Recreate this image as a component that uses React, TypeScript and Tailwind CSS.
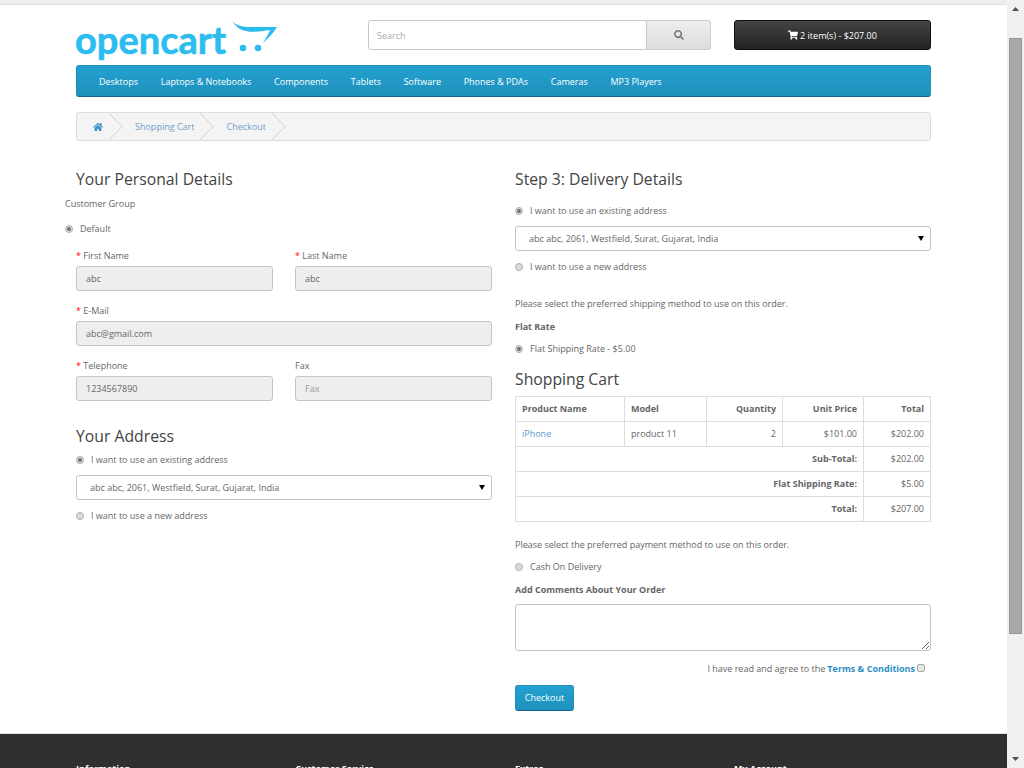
import { ReactNode } from 'react'
import { FaHome, FaSearch, FaShoppingCart } from 'react-icons/fa'

const navigation = ['Desktops', 'Laptops & Notebooks', 'Components', 'Tablets', 'Software', 'Phones & PDAs', 'Cameras', 'MP3 Players']

const footerColumns = ['Information', 'Customer Service', 'Extras', 'My Account']

function Radio({ checked = false }: { checked?: boolean }) {
  return (
    <span className="flex h-[8px] w-[8px] shrink-0 items-center justify-center rounded-full border border-[#b0b0b0] bg-[#dcdcdc]">
      {checked && <span className="h-[4px] w-[4px] rounded-full bg-[#6e6e6e]" />}
    </span>
  )
}

function RadioRow({ label, checked = false, className = '' }: { label: string; checked?: boolean; className?: string }) {
  return (
    <div className={`flex h-[18px] items-center gap-[7px] ${className}`}>
      <Radio checked={checked} />
      <span>{label}</span>
    </div>
  )
}

function Field({ label, value, required = false, placeholder = false }: { label: string; value: string; required?: boolean; placeholder?: boolean }) {
  return (
    <div>
      <div className="h-[18px] leading-[20px]">
        {required && <span className="text-[#f00]">* </span>}
        {label}
      </div>
      <div className={`mt-[2px] flex h-[25px] items-center rounded-[3px] border border-[#c4c4c4] bg-[#eeeeee] px-[9px] ${placeholder ? 'text-[#999]' : ''}`}>
        {value}
      </div>
    </div>
  )
}

function AddressSelect() {
  return (
    <div className="flex h-[25px] items-center justify-between rounded-[3px] border border-[#c4c4c4] bg-white pl-[13px] pr-[6px]">
      <span>abc abc, 2061, Westfield, Surat, Gujarat, India</span>
      <svg width="6" height="5" viewBox="0 0 6 5" className="text-black">
        <path d="M0 0h6L3 5z" fill="currentColor" />
      </svg>
    </div>
  )
}

function Heading({ children, className = '' }: { children: string; className?: string }) {
  return <h2 className={`h-[22px] text-[15.75px] leading-[22px] text-[#444] ${className}`}>{children}</h2>
}

function Crumb({ children }: { children: ReactNode }) {
  return (
    <div className="relative flex h-full items-center pr-[12px]">
      {children}
      <span className="absolute right-[-4px] top-[4px] h-[19px] w-[19px] rotate-45 border-r border-t border-[#d9d9d9]" />
    </div>
  )
}

export default function App() {
  return (
    <div className="flex h-[768px] w-[1024px] overflow-hidden bg-white font-['Open_Sans',sans-serif] text-[9px] text-[#666]">
      <div className="flex h-[768px] w-[1007px] shrink-0 flex-col overflow-hidden">
        {/* Top bar */}
        <div className="h-[5px] shrink-0 border-b border-[#dddddd] bg-[#eeeeee]" />

        <div className="mx-auto w-[855px] shrink-0">
          {/* Logo, search, cart */}
          <header className="mt-[15px] flex h-[30px] items-start">
            <div className="relative h-[40px] w-[292px]">
              <span className="ml-[-1px] font-['Lato',sans-serif] text-[38px] font-bold leading-[38px] text-[#2cbdf0] [-webkit-text-stroke:0.6px_#2cbdf0]">
                opencart
              </span>
              <svg width="50" height="36" viewBox="0 0 50 36" className="absolute left-[152px] top-0">
                <path d="M4 1C8 6 16 7 24 7C32 7 42 7 49 7C46 12 41 18 35 23C38 18 41 13 42 10C34 11 26 13 18 11C12 10 7 6 4 1Z" fill="#2cbdf0" />
                <circle cx="15" cy="28" r="3.3" fill="#2cbdf0" />
                <circle cx="30" cy="28" r="3.3" fill="#2cbdf0" />
              </svg>
            </div>
            <div className="flex h-[30px] w-[343px]">
              <div className="flex flex-1 items-center rounded-l-[3px] border border-[#c8c8c8] bg-white pl-[8px] pt-[2px] text-[#aaa]">Search</div>
              <div className="flex w-[64px] items-center justify-center rounded-r-[3px] border border-l-0 border-[#cccccc] bg-gradient-to-b from-[#eeeeee] to-[#dddddd] text-[#777]">
                <FaSearch size={10} />
              </div>
            </div>
            <div className="ml-[23px] flex h-[30px] w-[197px] items-center justify-center gap-[2px] rounded-[3px] border border-[#111] bg-gradient-to-b from-[#444444] to-[#222222] pt-[2px] text-white">
              <FaShoppingCart size={10} className="mb-[2px]" />
              <span>2 item(s) - $207.00</span>
            </div>
          </header>

          {/* Main menu */}
          <nav className="mt-[15px] flex h-[32px] items-center gap-[22.7px] rounded-[3px] border border-[#1f90bb] border-b-[#14698d] bg-gradient-to-b from-[#23a1d1] to-[#1f90bb] pl-[22px] pt-[2px] text-white">
            {navigation.map((item) => (
              <span key={item}>{item}</span>
            ))}
          </nav>

          {/* Breadcrumb */}
          <div className="mt-[15px] flex h-[29px] items-center gap-[20px] overflow-hidden rounded-[3px] border border-[#dddddd] bg-[#f4f4f4] pl-[15px] text-[#6f9fc8]">
            <Crumb>
              <span className="flex w-[11px] justify-center">
                <FaHome size={10} className="text-[#3a90bf]" />
              </span>
            </Crumb>
            <Crumb>
              <span>Shopping Cart</span>
            </Crumb>
            <Crumb>
              <span>Checkout</span>
            </Crumb>
          </div>

          {/* Checkout form */}
          <div className="mt-[27px] grid grid-cols-[416px_416px] gap-[23px]">
            <div>
              <Heading>Your Personal Details</Heading>
              <div className="ml-[-11px] mt-[4px] h-[18px] leading-[20px]">Customer Group</div>
              <RadioRow label="Default" checked className="ml-[-11px] mt-[8px]" />
              <div className="mt-[8px] grid grid-cols-[197px_197px] gap-x-[22px] gap-y-[10px]">
                <Field label="First Name" value="abc" required />
                <Field label="Last Name" value="abc" required />
                <div className="col-span-2">
                  <Field label="E-Mail" value="abc@gmail.com" required />
                </div>
                <Field label="Telephone" value="1234567890" required />
                <Field label="Fax" value="Fax" placeholder />
              </div>
              <Heading className="mt-[24px]">Your Address</Heading>
              <RadioRow label="I want to use an existing address" checked className="mt-[4px]" />
              <div className="mt-[6px]">
                <AddressSelect />
              </div>
              <RadioRow label="I want to use a new address" className="mt-[7px]" />
            </div>

            <div>
              <Heading>Step 3: Delivery Details</Heading>
              <RadioRow label="I want to use an existing address" checked className="mt-[12px]" />
              <div className="mt-[6px]">
                <AddressSelect />
              </div>
              <RadioRow label="I want to use a new address" className="mt-[7px]" />
              <p className="mt-[18px] h-[18px] leading-[20px]">Please select the preferred shipping method to use on this order.</p>
              <p className="mt-[5px] h-[18px] font-bold leading-[20px]">Flat Rate</p>
              <RadioRow label="Flat Shipping Rate - $5.00" checked className="mt-[5px]" />
              <Heading className="mt-[10px]">Shopping Cart</Heading>

              <table className="mt-[6px] w-[415px] table-fixed border-collapse [&_td]:h-[25px] [&_td]:border [&_td]:border-[#dddddd] [&_td]:px-[6px] [&_td]:py-0">
                <colgroup>
                  <col className="w-[109px]" />
                  <col className="w-[82px]" />
                  <col className="w-[76px]" />
                  <col className="w-[81px]" />
                  <col className="w-[67px]" />
                </colgroup>
                <tbody>
                  <tr className="font-bold">
                    <td>Product Name</td>
                    <td>Model</td>
                    <td className="text-right">Quantity</td>
                    <td className="text-right">Unit Price</td>
                    <td className="text-right">Total</td>
                  </tr>
                  <tr>
                    <td className="text-[#5a9bd0]">iPhone</td>
                    <td>product 11</td>
                    <td className="text-right">2</td>
                    <td className="text-right">$101.00</td>
                    <td className="text-right">$202.00</td>
                  </tr>
                  <tr>
                    <td colSpan={4} className="text-right font-bold">Sub-Total:</td>
                    <td className="text-right">$202.00</td>
                  </tr>
                  <tr>
                    <td colSpan={4} className="text-right font-bold">Flat Shipping Rate:</td>
                    <td className="text-right">$5.00</td>
                  </tr>
                  <tr>
                    <td colSpan={4} className="text-right font-bold">Total:</td>
                    <td className="text-right">$207.00</td>
                  </tr>
                </tbody>
              </table>

              <p className="mt-[13px] h-[18px] leading-[20px]">Please select the preferred payment method to use on this order.</p>
              <RadioRow label="Cash On Delivery" className="mt-[5px]" />
              <p className="mt-[4px] h-[18px] font-bold leading-[20px]">Add Comments About Your Order</p>
              <textarea readOnly className="mt-[6px] block h-[47px] w-[416px] rounded-[3px] border border-[#c4c4c4] bg-white" />
              <div className="mt-[9px] flex h-[18px] items-center justify-end pr-[6px]">
                <span>I have read and agree to the </span>
                <span className="ml-[2px] font-bold text-[#2a8fc0]">Terms &amp; Conditions</span>
                <span className="mb-[2px] ml-[2px] h-[8px] w-[8px] rounded-[2px] border border-[#a9a9a9] bg-[#e6e6e6]" />
              </div>
              <button className="mt-[7px] block h-[26px] w-[59px] rounded-[3px] border border-[#1f90bb] border-b-[#14698d] bg-gradient-to-b from-[#23a1d1] to-[#1f90bb] text-white">
                Checkout
              </button>
            </div>
          </div>
        </div>

        {/* Footer */}
        <footer className="mt-[22px] h-[200px] shrink-0 border-t border-[#dddddd] bg-[#303030] pt-[27px] text-[9px] font-bold text-white">
          <div className="mx-auto grid w-[855px] grid-cols-[219.5px_219.5px_219px_197px]">
            {footerColumns.map((title) => (
              <div key={title} className="leading-[16px]">{title}</div>
            ))}
          </div>
        </footer>
      </div>

      {/* Scrollbar */}
      <div className="flex h-[768px] w-[17px] shrink-0 flex-col items-center bg-[#f1f1f1]">
        <svg width="17" height="17" viewBox="0 0 17 17" className="shrink-0 text-[#505050]">
          <path d="M5 11L8.5 7L12 11z" fill="currentColor" />
        </svg>
        <div className="mt-[21px] h-[596px] w-[13px] shrink-0 border border-[#959595] bg-[#a8a8a8]" />
        <svg width="17" height="17" viewBox="0 0 17 17" className="mt-auto shrink-0 text-[#505050]">
          <path d="M5 6L8.5 10L12 6z" fill="currentColor" />
        </svg>
      </div>
    </div>
  )
}
